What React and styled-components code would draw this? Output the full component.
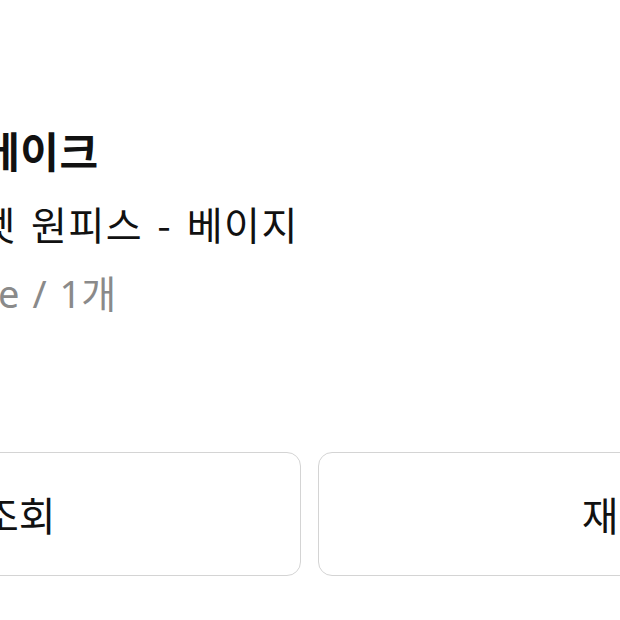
import React from 'react'
import styled, { createGlobalStyle } from 'styled-components'

const GlobalStyle = createGlobalStyle`
  html, body {
    margin: 0;
    padding: 0;
    background: #fff;
  }
  body {
    font-family: "Noto Sans CJK KR", "Noto Sans", sans-serif;
    color: #111;
  }
`

const Viewport = styled.div`
  width: 620px;
  height: 620px;
  overflow: hidden;
  background: #fff;
`

const Sheet = styled.div`
  width: 1293px;
  margin-left: -337px;
  padding-top: 122px;
`

const OrderItem = styled.div`
  display: flex;
  gap: 30px;
  align-items: flex-start;
`

const Thumb = styled.div`
  flex: 0 0 249px;
  height: 255px;
  border-radius: 12px;
  background: #e9e4dc;
`

const Info = styled.div`
  display: flex;
  flex-direction: column;
`

const Brand = styled.div`
  font-size: 42px;
  font-weight: 700;
  line-height: 56px;
  letter-spacing: 0.5px;
  white-space: nowrap;
`

const Product = styled.div`
  margin-top: 17px;
  font-size: 39px;
  font-weight: 400;
  line-height: 56px;
  letter-spacing: 1.5px;
  word-spacing: 4px;
  white-space: nowrap;
`

const Option = styled.div`
  margin-top: 14px;
  font-family: "Noto Sans", "Noto Sans CJK KR", sans-serif;
  font-size: 38px;
  font-weight: 400;
  line-height: 56px;
  color: #8a8a8a;
  word-spacing: 3px;
  white-space: nowrap;
`

const Actions = styled.div`
  display: grid;
  grid-template-columns: 1fr 1fr;
  gap: 17px;
  margin-top: 75px;
`

const ActionButton = styled.button`
  height: 124px;
  border: 1.5px solid #d4d4d4;
  border-radius: 14px;
  background: #fff;
  font-family: "Noto Sans CJK KR", "Noto Sans", sans-serif;
  font-size: 40px;
  font-weight: 400;
  color: #111;
`

export default function App() {
  return (
    <Viewport>
      <GlobalStyle />
      <Sheet>
        <OrderItem>
          <Thumb />
          <Info>
            <Brand>라베이크</Brand>
            <Product>벨벳 원피스 - 베이지</Product>
            <Option>Free / 1개</Option>
          </Info>
        </OrderItem>
        <Actions>
          <ActionButton>배송조회</ActionButton>
          <ActionButton>재구매</ActionButton>
        </Actions>
      </Sheet>
    </Viewport>
  )
}
